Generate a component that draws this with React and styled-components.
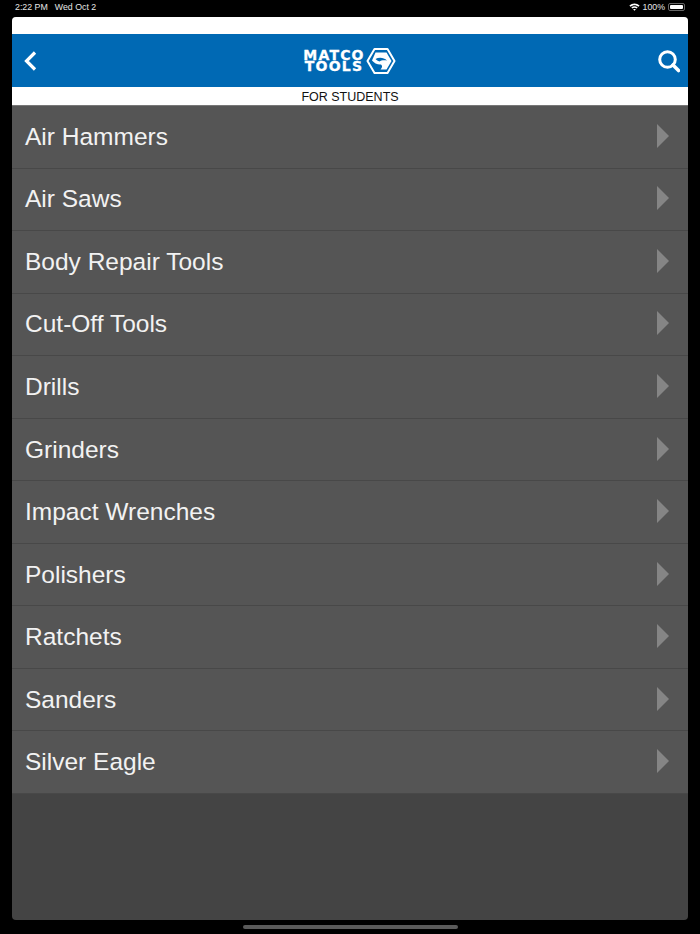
import styled, { createGlobalStyle } from 'styled-components';

const categories = [
	'Air Hammers',
	'Air Saws',
	'Body Repair Tools',
	'Cut-Off Tools',
	'Drills',
	'Grinders',
	'Impact Wrenches',
	'Polishers',
	'Ratchets',
	'Sanders',
	'Silver Eagle',
];

export default function App() {
	return (
		<Screen>
			<GlobalStyle />
			<StatusBar>
				<StatusTime>
					<span>2:22 PM</span>
					<span>Wed Oct 2</span>
				</StatusTime>
				<StatusRight>
					<svg width="11" height="8" viewBox="0 0 11 8">
						<path d="M0.4 2.6C3.3 -0.2 7.7 -0.2 10.6 2.6L9.5 3.7C7.2 1.6 3.8 1.6 1.5 3.7Z" fill="#fff" />
						<path d="M2.3 4.5C4 2.9 7 2.9 8.7 4.5L7.6 5.6C6.5 4.6 4.5 4.6 3.4 5.6Z" fill="#fff" />
						<path d="M4.2 6.4C4.9 5.8 6.1 5.8 6.8 6.4L5.5 7.8Z" fill="#fff" />
					</svg>
					<span>100%</span>
					<Battery>
						<BatteryFill />
					</Battery>
				</StatusRight>
			</StatusBar>
			<Panel>
				<TopGap />
				<Header>
					<svg width="14" height="20" viewBox="0 0 14 20">
						<path d="M12 1.5L3.5 10L12 18.5" fill="none" stroke="#fff" strokeWidth="3.2" />
					</svg>
					<Logo>
						<LogoText>
							<span>MATCO</span>
							<span>TOOLS</span>
						</LogoText>
						<svg width="30" height="28" viewBox="0 0 30 28">
							<path d="M8.5 2H21.5L28.5 14L21.5 26H8.5L1.5 14Z" fill="none" stroke="#fff" strokeWidth="2" strokeLinejoin="round" />
							<path d="M9.5 5.5H20.5L25.5 14L20.5 22.5H14.5C16.5 20.5 16.5 18.5 15 17.5C12 18 8 16 6 13.5Z" fill="#fff" />
							<path d="M9.5 12C13 10 18 10.5 21 13.5C18 12.8 15 13.2 13.5 14.5C12 14 10.5 13.2 9.5 12Z" fill="#0069b4" />
						</svg>
					</Logo>
					<svg width="23" height="24" viewBox="0 0 23 24">
						<circle cx="10.5" cy="10.5" r="7.8" fill="none" stroke="#fff" strokeWidth="3" />
						<path d="M16 16L21.5 21.5" fill="none" stroke="#fff" strokeWidth="3.6" strokeLinecap="round" />
					</svg>
				</Header>
				<Subtitle>FOR STUDENTS</Subtitle>
				<List>
					{categories.map((name) => (
						<Row key={name}>
							<span>{name}</span>
							<Arrow />
						</Row>
					))}
				</List>
			</Panel>
			<HomeBar>
				<HomeIndicator />
			</HomeBar>
		</Screen>
	);
}

const GlobalStyle = createGlobalStyle`
	html, body {
		margin: 0;
		padding: 0;
		background: #000000;
	}
`;

const Screen = styled.div`
	width: 700px;
	height: 934px;
	display: flex;
	flex-direction: column;
	overflow: hidden;
	background: #000000;
	font-family: 'Liberation Sans', Arial, sans-serif;
`;

const StatusBar = styled.div`
	height: 17px;
	flex: none;
	padding: 0 15px 3px 15px;
	box-sizing: border-box;
	display: flex;
	align-items: center;
	justify-content: space-between;
	color: #e6e6e6;
	font-size: 8.8px;
`;

const StatusTime = styled.div`
	display: flex;
	gap: 7px;
`;

const StatusRight = styled.div`
	display: flex;
	align-items: center;
	gap: 3px;
`;

const Battery = styled.div`
	width: 17px;
	height: 8px;
	padding: 1px;
	box-sizing: border-box;
	border: 1px solid #666666;
	border-radius: 2px;
	display: flex;
`;

const BatteryFill = styled.div`
	flex: 1;
	background: #ffffff;
	border-radius: 1px;
`;

const Panel = styled.div`
	width: 676px;
	height: 902.5px;
	flex: none;
	margin-left: 12px;
	display: flex;
	flex-direction: column;
	border-radius: 4px;
	overflow: hidden;
	background: #444444;
`;

const TopGap = styled.div`
	height: 17px;
	flex: none;
	background: #ffffff;
`;

const Header = styled.div`
	height: 53px;
	flex: none;
	padding: 0 8px 0 11px;
	box-sizing: border-box;
	display: flex;
	align-items: center;
	justify-content: space-between;
	background: #0069b4;
`;

const Logo = styled.div`
	display: flex;
	align-items: center;
	gap: 1px;
	margin-left: 5px;
`;

const LogoText = styled.div`
	display: flex;
	flex-direction: column;
	align-items: center;
	color: #ffffff;
	font-family: 'DejaVu Sans', sans-serif;
	font-size: 14px;
	font-weight: 700;
	line-height: 10.5px;
	letter-spacing: 1.2px;
	-webkit-text-stroke: 0.3px #ffffff;
`;

const Subtitle = styled.div`
	height: 18px;
	flex: none;
	padding-top: 2px;
	box-sizing: border-box;
	display: flex;
	align-items: center;
	justify-content: center;
	background: #ffffff;
	color: #111111;
	font-size: 12.5px;
`;

const List = styled.ul`
	margin: 0;
	padding: 0;
	list-style: none;
	border-top: 1px solid #777777;
`;

const Row = styled.li`
	height: 62.55px;
	padding: 0 19px 0 13px;
	box-sizing: border-box;
	display: flex;
	align-items: center;
	justify-content: space-between;
	background: #555555;
	border-bottom: 1px solid #484848;
	color: #f2f2f2;
	font-size: 24.5px;
`;

const Arrow = styled.div`
	width: 0;
	height: 0;
	margin-bottom: 2px;
	border-style: solid;
	border-width: 12px 0 12px 12px;
	border-color: transparent transparent transparent #858585;
`;

const HomeBar = styled.div`
	flex: 1;
	display: flex;
	justify-content: center;
	padding-top: 5.5px;
`;

const HomeIndicator = styled.div`
	width: 215px;
	height: 4px;
	border-radius: 2px;
	background: #5a5a5a;
`;
